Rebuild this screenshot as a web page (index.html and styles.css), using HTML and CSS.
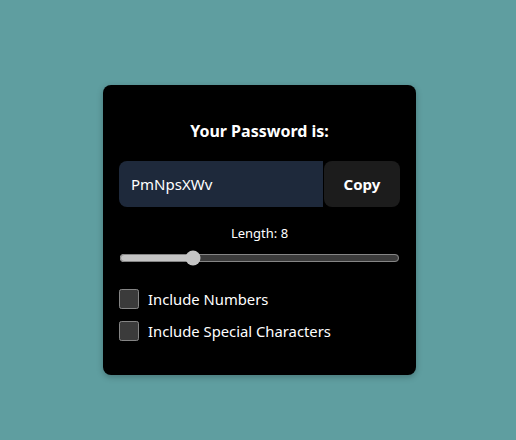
FILE: index.html
```html
<!DOCTYPE html>
<html lang="en">
<head>
<meta charset="utf-8">
<link rel="stylesheet" href="styles.css">
</head>
<body>
  <main class="card">
    <h1 class="title">Your Password is:</h1>
    <div class="pw-row">
      <input class="pw-input" type="text" value="PmNpsXWv" readonly>
      <button class="copy-btn">Copy</button>
    </div>
    <div class="length">
      <label class="length-label" for="len">Length: 8</label>
      <input id="len" class="range" type="range" min="4" max="20" value="8">
    </div>
    <label class="option"><input class="check" type="checkbox"> Include Numbers</label>
    <label class="option"><input class="check" type="checkbox"> Include Special Characters</label>
  </main>
</body>
</html>
```

FILE: styles.css
```css
html, body {
  margin: 0;
  height: 100%;
}
body {
  background: #5f9ea0;
  font-family: "Noto Sans", "Open Sans", sans-serif;
  color: #fff;
  display: flex;
  justify-content: center;
  align-items: flex-start;
  padding-left: 3px;
  box-sizing: border-box;
}
.card {
  color-scheme: dark;
  margin-top: 85px;
  width: 313px;
  box-sizing: border-box;
  background: #000;
  border-radius: 8px;
  padding: 31px 16px 34px;
  box-shadow: 0 2px 6px rgba(0,0,0,0.25);
  display: flex;
  flex-direction: column;
}
.title {
  margin: 0;
  font-size: 16px;
  font-weight: 700;
  text-align: center;
  line-height: 30px;
}
.pw-row {
  display: flex;
  margin-top: 15px;
  height: 46px;
}
.pw-input {
  flex: 1;
  min-width: 0;
  background: #1e293b;
  border: none;
  border-radius: 8px 0 0 8px;
  color: #fff;
  font: inherit;
  font-size: 15px;
  padding: 0 12px;
  outline: none;
}
.copy-btn {
  width: 76px;
  margin-left: 1px;
  background: #1c1c1c;
  border: none;
  border-radius: 8px;
  color: #fff;
  font: inherit;
  font-weight: 700;
  font-size: 15px;
}
.length {
  display: flex;
  flex-direction: column;
  align-items: stretch;
  margin-top: 16px;
}
.length-label {
  text-align: center;
  font-size: 13px;
  line-height: 20px;
}
.range {
  margin: 7px 0 0;
  width: 100%;
  accent-color: #c4c4c4;
}
.option {
  display: flex;
  align-items: center;
  gap: 9px;
  font-size: 14.8px;
  line-height: 20px;
}
.option + .option {
  margin-top: 12px;
}
.check {
  margin: 0;
  width: 20px;
  height: 20px;
}
.length + .option {
  margin-top: 23px;
}
```
